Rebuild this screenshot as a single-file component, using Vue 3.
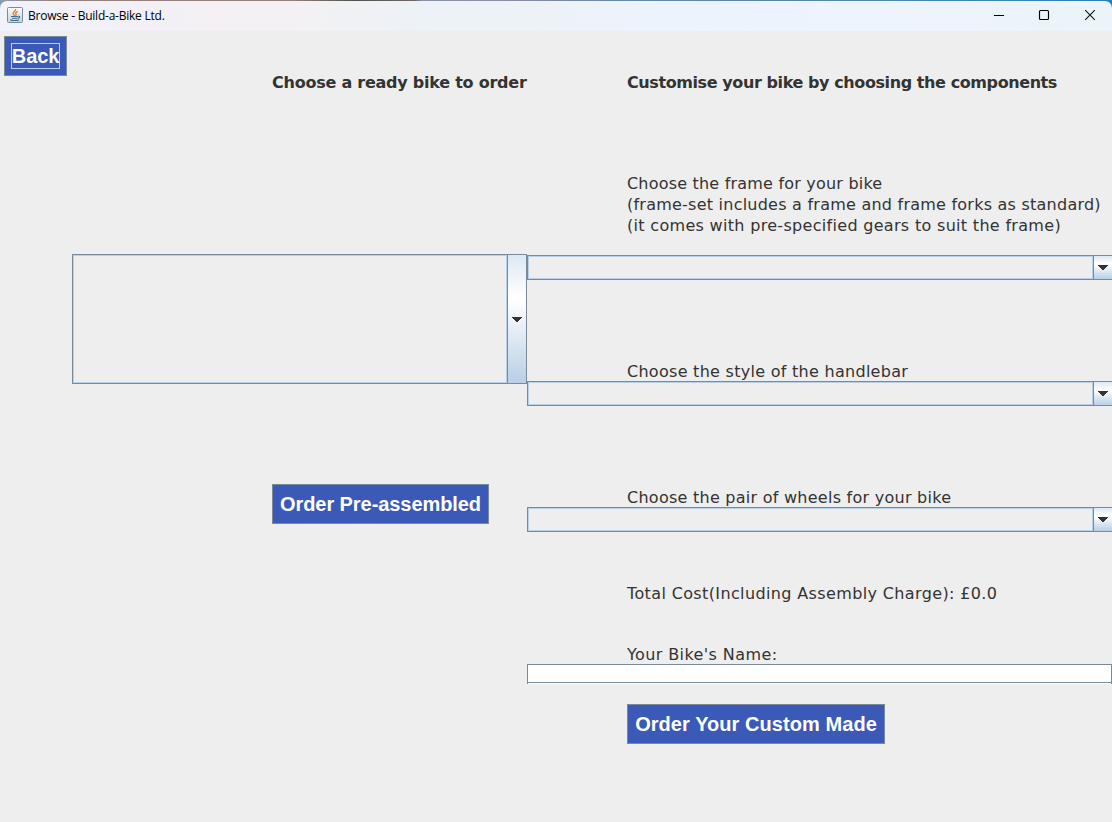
<script setup>
const frameLines = [
  { text: 'Choose the frame for your bike', cls: 'l1' },
  { text: '(frame-set includes a frame and frame forks as standard)', cls: 'l2' },
  { text: '(it comes with pre-specified gears to suit the frame)', cls: 'l3' },
]
</script>

<template>
  <div class="window">
    <header class="titlebar">
      <svg class="java" width="16" height="16" viewBox="0 0 16 16">
        <defs>
          <linearGradient id="jg" x1="0" y1="0" x2="0" y2="1">
            <stop offset="0" stop-color="#fdfdfd" />
            <stop offset="1" stop-color="#c3d2de" />
          </linearGradient>
        </defs>
        <rect x="0.5" y="0.5" width="15" height="15" rx="1" fill="url(#jg)" stroke="#6f8da6" />
        <path d="M8.6 2C9.4 4 5.9 4.6 6.1 6.3C6.3 7.4 7.6 7.6 7.4 9M10.8 4.4C8.6 5.3 8.2 6.1 9 7C9.3 7.6 8.9 8 8.6 8.8" fill="none" stroke="#ee7420" stroke-width="1.3" />
        <path d="M4 9.5H11M5 11.3H10.4M3.2 12.7C5.4 13.9 10.3 13.7 12 12.7M11.2 9.3C13.6 8.9 13 10.9 10.8 11.3" fill="none" stroke="#40708f" stroke-width="1.1" />
      </svg>
      <span class="title">Browse - Build-a-Bike Ltd.</span>
      <svg class="controls" width="104" height="12" viewBox="0 0 104 12">
        <path d="M0 6.5H10" stroke="#000" />
        <rect x="45.5" y="1.5" width="9" height="9" rx="1" fill="none" stroke="#000" stroke-width="1.15" />
        <path d="M91.2 1.2L100.8 10.8M100.8 1.2L91.2 10.8" stroke="#111" stroke-width="1.1" />
      </svg>
    </header>

    <main class="body">
      <section class="left">
        <button class="btn back"><span>Back</span></button>
        <h2 class="head ready"><span class="h1t">Choose a ready bike to order</span></h2>
        <div class="combo tall">
          <div class="value"></div>
          <div class="arrow"><svg width="10" height="5" viewBox="0 0 10 5" shape-rendering="crispEdges"><path d="M0 0H10V1H9V2H8V3H7V4H6V5H4V4H3V3H2V2H1V1H0Z" fill="#333" /></svg></div>
        </div>
        <button class="btn pre"><span>Order Pre-assembled</span></button>
      </section>

      <section class="right">
        <h2 class="head custom"><span class="h2t">Customise your bike by choosing the components</span></h2>
        <div class="frame">
          <p v-for="l in frameLines" :key="l.cls" class="label"><span :class="l.cls">{{ l.text }}</span></p>
        </div>
        <div class="combo">
          <div class="value"></div>
          <div class="arrow"><svg width="10" height="5" viewBox="0 0 10 5" shape-rendering="crispEdges"><path d="M0 0H10V1H9V2H8V3H7V4H6V5H4V4H3V3H2V2H1V1H0Z" fill="#333" /></svg></div>
        </div>
        <p class="label gap-a"><span class="l4">Choose the style of the handlebar</span></p>
        <div class="combo">
          <div class="value"></div>
          <div class="arrow"><svg width="10" height="5" viewBox="0 0 10 5" shape-rendering="crispEdges"><path d="M0 0H10V1H9V2H8V3H7V4H6V5H4V4H3V3H2V2H1V1H0Z" fill="#333" /></svg></div>
        </div>
        <p class="label gap-a"><span class="l5">Choose the pair of wheels for your bike</span></p>
        <div class="combo">
          <div class="value"></div>
          <div class="arrow"><svg width="10" height="5" viewBox="0 0 10 5" shape-rendering="crispEdges"><path d="M0 0H10V1H9V2H8V3H7V4H6V5H4V4H3V3H2V2H1V1H0Z" fill="#333" /></svg></div>
        </div>
        <p class="label total"><span class="l6">Total Cost(Including Assembly Charge): £0.0</span></p>
        <p class="label name"><span class="l7">Your Bike's Name:</span></p>
        <input class="field" type="text" />
        <button class="btn made"><span>Order Your Custom Made</span></button>
      </section>
    </main>
  </div>
</template>

<style scoped>
* { box-sizing: border-box; }
.window {
  width: 1112px;
  height: 822px;
  overflow: hidden;
  display: flex;
  flex-direction: column;
  background: linear-gradient(90deg, #8e9aa8 0, #96807b 60px, #96807b 290px, #4e5450 355px, #6c6665 415px, #8592a8 422px, #8d8ca5 500px, #6689a8 620px, #4a87b0 900px, #2b7fb5 1112px);
}
.titlebar {
  height: 30px;
  margin-top: 1px;
  flex: none;
  display: flex;
  align-items: center;
  padding: 0 14px 0 7px;
  border-radius: 7px 7px 0 0;
  background: linear-gradient(90deg, #f1f2fa 0, #f4f0f4 220px, #f3f1f3 300px, #ecf2f7 430px, #edf2f6 520px, #edf3fc 640px, #eef3fc 980px, #ebf4f8 1060px);
}
.java { flex: none; margin-top: -2px; }
.title {
  font: 12px/16px "Open Sans", "Noto Sans", sans-serif;
  margin-left: 5px;
  letter-spacing: -0.23px;
  color: #000;
  white-space: nowrap;
}
.controls { margin-left: auto; margin-top: -2px; flex: none; }
.body {
  flex: 1;
  display: flex;
  background: #eee;
}
.left { width: 527px; flex: none; display: flex; flex-direction: column; align-items: flex-start; }
.right { width: 585px; flex: none; overflow: hidden; }
.btn {
  display: flex;
  align-items: center;
  justify-content: center;
  height: 40px;
  padding: 0;
  background: #3b59b6;
  border: 1px solid #7a8a99;
  border-radius: 0;
  color: #fff;
  font: bold 20px/24px "Liberation Sans", Arial, sans-serif;
  white-space: nowrap;
}
.back { width: 63px; margin: 5px 0 0 4px; }
.back span { width: 49px; height: 26px; border: 1px solid #b8cfe5; display: flex; justify-content: center; line-height: 24px; letter-spacing: -0.1px; }
.head {
  margin: 0;
  height: 21px;
  font: bold 16px/21px "DejaVu Sans", Verdana, sans-serif;
  color: #333;
  white-space: nowrap;
}
.ready { margin: -4px 0 0 272px; }
.custom { margin: 41px 0 0 100px; }
.label {
  margin: 0 0 0 100px;
  height: 21px;
  font: 16px/21px "DejaVu Sans", Verdana, sans-serif;
  color: #333;
  white-space: nowrap;
}
.h1t { letter-spacing: -0.24px; }
.h2t { letter-spacing: -0.41px; }
.l1 { letter-spacing: 0.2px; }
.l2 { letter-spacing: 0.235px; }
.l3 { letter-spacing: 0.31px; }
.l4 { letter-spacing: 0.28px; }
.l5 { letter-spacing: 0.26px; }
.l6 { letter-spacing: 0.37px; }
.l7 { letter-spacing: 0.4px; }
.frame { margin: 80px 0 19px; }
.combo {
  display: flex;
  width: 586px;
  height: 25px;
  border: 1px solid #7a8a99;
}
.value { flex: 1; border: 1px solid #b8cfe5; }
.arrow {
  width: 19px;
  flex: none;
  border-left: 1px solid #7a8a99;
  background: linear-gradient(#dde8f3 0, #fff 33%, #fff 35%, #b8cfe5 100%);
  display: flex;
  align-items: center;
  justify-content: center;
}
.tall { width: 455px; height: 130px; margin: 161px 0 0 72px; }
.pre { width: 217px; margin: 100px 0 0 272px; letter-spacing: -0.07px; }
.gap-a { margin-top: 81px; height: 20px; }
.total { margin-top: 51px; }
.name { margin-top: 40px; height: 20px; }
.field {
  display: block;
  width: 585px;
  height: 20px;
  border: 1px solid #7a8a99;
  border-bottom: 0;
  border-radius: 0;
  background: linear-gradient(#fff 17px, #7a8a99 17px, #7a8a99 18px, #fff 18px);
  padding: 0;
  outline: none;
}
.made { width: 258px; margin: 20px 0 0 100px; letter-spacing: 0.06px; }
</style>

<style>
body { margin: 0; overflow: hidden; }
</style>
